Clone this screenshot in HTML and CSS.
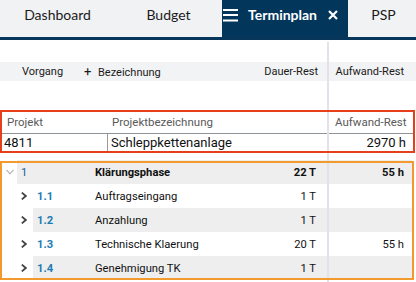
FILE: index.html
```html
<!DOCTYPE html>
<html lang="de">
<head>
<meta charset="UTF-8" />
<meta name="viewport" content="width=device-width, initial-scale=1" />
<title>Terminplan</title>
<link rel="stylesheet" href="styles.css">
</head>
<body>

<header class="tabs">
  <div class="tab tab-dashboard">Dashboard</div>
  <div class="tab tab-budget">Budget</div>
  <div class="tab tab-active">
    <svg class="menu-icon" width="15" height="14" viewBox="0 0 15 14">
      <path d="M0 2h15M0 7h15M0 12.5h15" stroke="#fff" stroke-width="2" />
    </svg>
    <span class="tab-label">Terminplan</span>
    <svg class="close-icon" width="10" height="10" viewBox="0 0 10 10">
      <path d="M1 1l8 8M9 1l-8 8" stroke="#fff" stroke-width="2.2" />
    </svg>
  </div>
  <div class="tab tab-psp">PSP</div>
</header>

<main class="plan">
  <div class="divider"></div>

  <div class="colhead">
    <span class="ch-vorgang">Vorgang</span>
    <span class="ch-name"><span class="plus">+</span>Bezeichnung</span>
    <span class="ch-dauer">Dauer-Rest</span>
    <span class="ch-aufwand">Aufwand-Rest</span>
  </div>

  <section class="box project">
    <div class="proj-row proj-head">
      <span>Projekt</span>
      <span>Projektbezeichnung</span>
      <span>Aufwand-Rest</span>
    </div>
    <div class="proj-row proj-data">
      <span>4811</span>
      <span class="proj-name">Schleppkettenanlage</span>
      <span class="proj-sum">2970 h</span>
    </div>
  </section>

  <section class="box tree">
    <div class="row lvl0">
      <span class="toggle">
        <svg width="8" height="6" viewBox="0 0 8 6"><path d="M0.5 0.8l3.5 4 3.5-4" fill="none" stroke="#b5b5b5" stroke-width="1.2" /></svg>
      </span>
      <div class="cells">
        <span class="num">1</span>
        <span class="name">Klärungsphase</span>
        <span class="dauer">22 T</span>
        <span class="aufwand">55 h</span>
      </div>
    </div>
    <div class="row lvl1">
      <span class="toggle">
        <svg width="6" height="8" viewBox="0 0 6 8"><path d="M0.8 0.6l4 3.4-4 3.4" fill="none" stroke="#444" stroke-width="1.8" /></svg>
      </span>
      <div class="cells">
        <span class="num">1.1</span>
        <span class="name">Auftragseingang</span>
        <span class="dauer">1 T</span>
        <span class="aufwand"></span>
      </div>
    </div>
    <div class="row lvl1 alt">
      <span class="toggle">
        <svg width="6" height="8" viewBox="0 0 6 8"><path d="M0.8 0.6l4 3.4-4 3.4" fill="none" stroke="#444" stroke-width="1.8" /></svg>
      </span>
      <div class="cells">
        <span class="num">1.2</span>
        <span class="name">Anzahlung</span>
        <span class="dauer">1 T</span>
        <span class="aufwand"></span>
      </div>
    </div>
    <div class="row lvl1">
      <span class="toggle">
        <svg width="6" height="8" viewBox="0 0 6 8"><path d="M0.8 0.6l4 3.4-4 3.4" fill="none" stroke="#444" stroke-width="1.8" /></svg>
      </span>
      <div class="cells">
        <span class="num">1.3</span>
        <span class="name">Technische Klaerung</span>
        <span class="dauer">20 T</span>
        <span class="aufwand">55 h</span>
      </div>
    </div>
    <div class="row lvl1 alt">
      <span class="toggle">
        <svg width="6" height="8" viewBox="0 0 6 8"><path d="M0.8 0.6l4 3.4-4 3.4" fill="none" stroke="#444" stroke-width="1.8" /></svg>
      </span>
      <div class="cells">
        <span class="num">1.4</span>
        <span class="name">Genehmigung TK</span>
        <span class="dauer">1 T</span>
        <span class="aufwand"></span>
      </div>
    </div>
  </section>
</main>

</body>
</html>
```

FILE: styles.css
```css
body {
  margin: 0;
  width: 416px;
  height: 282px;
  overflow: hidden;
  background: #fff;
  font-family: Roboto, "Liberation Sans", sans-serif;
  color: #111;
  white-space: nowrap;
}

/* tab bar */
.tabs {
  display: flex;
  height: 37px;
  background: #f1f2f4;
  border-bottom: 3px solid #08365a;
  font-family: Lato, "Liberation Sans", sans-serif;
  font-size: 14px;
  color: #1a1a1a;
}
.tab {
  display: flex;
  align-items: center;
  justify-content: center;
  padding-bottom: 9px;
  box-sizing: border-box;
}
.tab-dashboard { width: 115px; }
.tab-budget { width: 107px; }
.tab-active {
  width: 126px;
  justify-content: flex-start;
  padding-left: 1px;
  background: #02365b;
  color: #fff;
  font-weight: 700;
}
.menu-icon { margin-top: 1px; }
.tab-label { margin-left: 10px; }
.close-icon { margin-left: 11px; margin-top: 2px; }
.tab-psp { flex: 1; padding-left: 3px; }

/* plan area */
.plan {
  position: relative;
  padding-top: 22px;
}
.divider {
  position: absolute;
  left: 327px;
  top: 2px;
  bottom: -10px;
  width: 2px;
  background: #e6e1e8;
  z-index: 2;
}

.colhead {
  display: flex;
  align-items: center;
  height: 19px;
  background: #f2f3f5;
  font-size: 11px;
  color: #1a1a1a;
}
.ch-vorgang { width: 62px; padding-left: 22px; }
.ch-name { flex: 1; }
.plus { display: inline-block; width: 14px; font-size: 13px; }
.ch-dauer { padding-right: 11px; }
.ch-aufwand { width: 87px; text-align: right; padding-right: 12px; box-sizing: border-box; }

/* highlighted boxes: frame drawn over the rows */
.box {
  position: relative;
  padding: 0 2px;
}
.box::after {
  content: "";
  position: absolute;
  border: 2px solid;
  z-index: 3;
}
.project {
  margin: 29px 1px 0 0;
}
.project::after {
  inset: 0 0 -2px 0;
  border-color: #e63f1c;
}

.proj-row {
  display: grid;
  grid-template-columns: 105px 222px 1fr;
}
.proj-head {
  height: 23px;
  align-items: center;
  font-size: 11.5px;
  color: #5a5a5a;
  border-bottom: 1px solid #8e9398;
}
.proj-head span:first-child { padding-left: 5px; }
.proj-head span:nth-child(2) { padding-left: 5px; }
.proj-head span:nth-child(3) { padding-left: 6px; }
.proj-data {
  height: 17px;
  align-items: center;
  font-size: 13px;
}
.proj-data span:first-child { padding-left: 2px; }
.proj-name {
  height: 100%;
  display: flex;
  align-items: center;
  padding-left: 3px;
  border-left: 1px solid #9a9a9a;
}
.proj-sum { text-align: right; padding-right: 7px; }

.tree {
  margin: 9px 2px 0 0;
}
.tree::after {
  inset: 1px 0 0 0;
  border-color: #f29a2e;
}

.row {
  display: flex;
  height: 24px;
  font-size: 11.2px;
}
.toggle {
  width: 15px;
  display: flex;
  align-items: center;
}
.lvl0 .toggle { padding-left: 4px; box-sizing: border-box; }
.lvl1 { padding-left: 16px; }
.lvl1 .toggle { padding-left: 3px; box-sizing: border-box; }

.cells {
  flex: 1;
  display: flex;
  align-items: center;
}
.lvl0 .cells { background: #eeeeee; font-weight: 700; }
.alt .cells { background: #eeeeee; }

.num { padding-left: 4px; color: #1c7cb3; }
.lvl0 .num { width: 74px; color: #22638f; font-weight: 400; }
.lvl1 .num { width: 58px; font-weight: 700; }
.name { flex: 1; }
.dauer { padding-right: 11px; }
.aufwand { width: 85px; text-align: right; padding-right: 8px; box-sizing: border-box; }
```
